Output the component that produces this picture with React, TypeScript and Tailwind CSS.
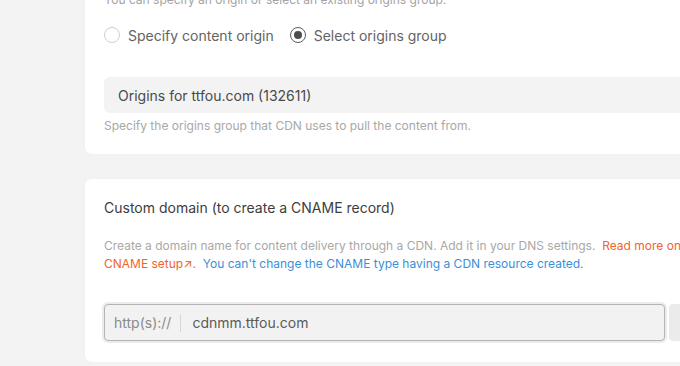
import React from 'react';

const Radio = ({ label, checked }: { label: string; checked?: boolean }) => {
  return (
    <label className="flex items-center gap-2 cursor-pointer">
      <span
        className={
          checked
            ? 'w-4 h-4 rounded-full border border-[#5c5c5c] flex items-center justify-center'
            : 'w-4 h-4 rounded-full border border-[#cfcfcf] flex items-center justify-center'
        }
      >
        {checked && <span className="w-2 h-2 rounded-full bg-[#4d4d4d]" />}
      </span>
      <span className="text-[14px] text-[#646464]">{label}</span>
    </label>
  );
};

const App = () => {
  return (
    <div
      className="w-[680px] h-[366px] overflow-hidden bg-[#f3f3f3] pl-[85px]"
      style={{ fontFamily: 'Inter, "Liberation Sans", sans-serif' }}
    >
      <div className="-mt-[28px] flex flex-col gap-[25px] w-[700px]">
        {/* origin card */}
        <section className="bg-white rounded-md pt-[19px] pb-[19px] pl-[19px] shadow-[0_0_1px_rgba(0,0,0,0.08)]">
          <p className="text-[12px] leading-[18px] text-[#a3a3a3]">
            You can specify an origin or select an existing origins group.
          </p>
          <div className="flex items-center gap-4 mt-[16px] h-5">
            <Radio label="Specify content origin" />
            <Radio label="Select origins group" checked />
          </div>
          <div className="mt-[32px] h-[36px] bg-[#f3f3f3] rounded-md flex items-center pl-[14px] text-[14px] text-[#4a4a4a]">
            Origins for ttfou.com (132611)
          </div>
          <p className="mt-[4px] text-[12px] leading-[18px] text-[#a8a8a8]">
            Specify the origins group that CDN uses to pull the content from.
          </p>
        </section>

        {/* custom domain card */}
        <section className="bg-white rounded-md pt-[19px] pb-[21px] pl-[19px] shadow-[0_0_1px_rgba(0,0,0,0.08)]">
          <h3 className="text-[14px] leading-5 text-[#3d3d3d]">Custom domain (to create a CNAME record)</h3>
          <p className="mt-[19px] w-[580px] text-[12px] leading-[18px] text-[#a8a8a8]">
            Create a domain name for content delivery through a CDN. Add it in your DNS settings.{'\u00a0\u00a0'}
            <span className="text-[#f0642d]">Read more on CNAME setup↗.</span>{'\u00a0\u00a0'}
            <span className="text-[#3b8fd9]">You can't change the CNAME type having a CDN resource created.</span>
          </p>
          <div className="mt-[31px] flex gap-1">
            <div className="w-[561px] h-[37px] flex items-center bg-[#f2f2f2] border border-[#b4b4b4] rounded ring-2 ring-[#ececec] text-[14px]">
              <span className="pl-[9px] pr-[9px] text-[#8a8a8a]">http(s)://</span>
              <span className="w-px h-[18px] bg-[#d6d6d6]" />
              <span className="pl-[11px] text-[#5a5a5a]">cdnmm.ttfou.com</span>
            </div>
            <div className="w-[60px] h-[37px] bg-[#ebebeb] rounded" />
          </div>
        </section>
      </div>
    </div>
  );
};

export default App;
